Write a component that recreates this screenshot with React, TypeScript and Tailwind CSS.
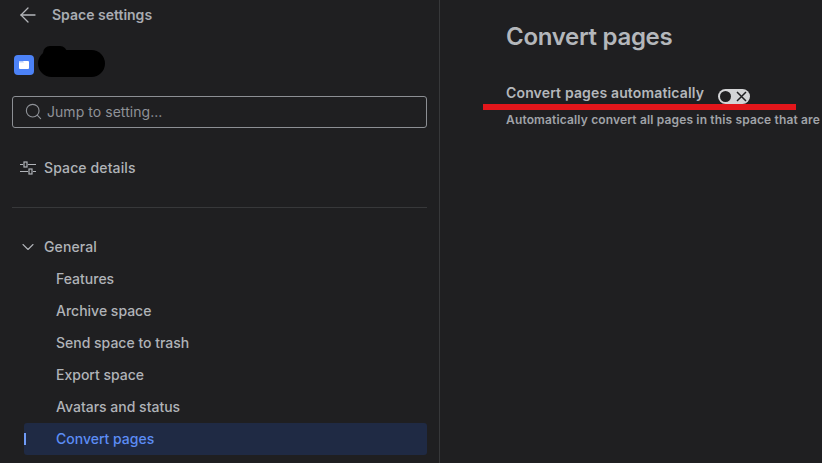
import { ArrowLeft, ChevronDown, Search } from "lucide-react";

const items = ["Features", "Archive space", "Send space to trash", "Export space", "Avatars and status"];

function SlidersIcon() {
  return (
    <svg width="18" height="16" viewBox="0 0 18 16" fill="none" stroke="currentColor" strokeWidth="1.2">
      <path d="M1 4.5h3M9 4.5h8M1 11.5h8M14 11.5h3" />
      <rect x="5" y="2" width="3" height="5" />
      <rect x="10" y="9" width="3" height="5" />
    </svg>
  );
}

function SpaceIcon() {
  return (
    <svg width="20" height="20" viewBox="0 0 20 20">
      <rect width="20" height="20" rx="4" fill="#4c82f7" />
      <path d="M5 7a1 1 0 0 1 1-1h8a1 1 0 0 1 1 1v6a1 1 0 0 1-1 1H6a1 1 0 0 1-1-1z" fill="#fff" />
      <path d="M5 7a1 1 0 0 1 1-1h3l1 1.5H5z" fill="#b9cffb" />
    </svg>
  );
}

export default function App() {
  return (
    <div className="relative flex h-[463px] w-[822px] overflow-hidden bg-[#1f1f21] font-['Inter',sans-serif] text-[#b0b3b8]">
      <aside className="flex w-[440px] shrink-0 flex-col border-r border-[#37383a] pl-3 pr-3">
        <div className="flex h-[30px] items-center">
          <ArrowLeft size={24} strokeWidth={1.3} className="ml-1 text-[#b4b6ba]" />
          <span className="ml-3 text-[14px] leading-5 font-semibold text-[#a9acb2]">Space settings</span>
        </div>
        <div className="mt-5 flex h-[30px] items-center pl-0.5">
          <SpaceIcon />
        </div>
        <div className="mt-[16px] flex h-8 items-center gap-1 rounded-[3px] border border-[#8c8f94] pb-0.5 pl-[11px] text-[14px] tracking-[0.05px] text-[#8f9298]">
          <Search size={19} strokeWidth={1.4} />
          <span>Jump to setting...</span>
        </div>
        <div className="mt-6 flex h-8 items-center gap-[7px] pl-[7px] text-[14px] font-medium tracking-[0.12px]">
          <SlidersIcon />
          <span className="pb-0.5">Space details</span>
        </div>
        <div className="mt-[23px] h-px bg-[#37383a]" />
        <div className="mt-[23px] flex h-8 items-center gap-1.5 pl-1.5 text-[14px] font-medium tracking-[0.12px]">
          <ChevronDown size={20} strokeWidth={1.3} />
          <span className="pb-0.5">General</span>
        </div>
        {items.map((item) => (
          <div key={item} className="flex h-8 items-center pb-0.5 pl-11 text-[14px] font-medium">
            {item}
          </div>
        ))}
        <div className="relative ml-3 flex h-8 items-center rounded-[3px] bg-[#1f2a44] pb-0.5 pl-8 text-[14px] font-medium text-[#5c8df5]">
          <span className="absolute left-0 top-[10px] h-[12px] w-0.5 bg-[#6f9bf7]" />
          Convert pages
        </div>
      </aside>
      <main className="min-w-0 flex-1 pl-[66px] pt-[21px]">
        <h1 className="text-[24px] leading-8 font-semibold tracking-[-0.3px] whitespace-nowrap text-[#b4b7bb]">Convert pages</h1>
        <div className="mt-7 flex items-center">
          <span className="text-[14px] leading-5 font-semibold tracking-[0.15px] whitespace-nowrap text-[#b4b7bb]">Convert pages automatically</span>
          <div className="mt-2 ml-[14px] flex h-[15px] w-8 shrink-0 items-center justify-between rounded-full bg-[#d3d4d6] pl-[2px] pr-[3px]">
            <span className="h-[11px] w-[11px] rounded-full bg-[#1f1f21]" />
            <svg width="11" height="11" viewBox="0 0 11 11" stroke="#1f1f21" strokeWidth="1.5">
              <path d="M1 1l9 9M10 1l-9 9" />
            </svg>
          </div>
        </div>
        <p className="mt-2 text-[12px] leading-4 font-semibold tracking-[0.15px] whitespace-nowrap text-[#a0a3a8]">
          Automatically convert all pages in this space that are
        </p>
      </main>
      {/* hand-drawn marks on top of the screenshot */}
      <div className="absolute left-[38px] top-[50px] h-[27px] w-[67px] rounded-[14px] bg-black" />
      <div className="absolute left-[43px] top-[46px] h-[14px] w-[24px] rounded-full bg-black" />
      <div className="absolute left-[483px] top-[104px] h-[6px] w-[313px] bg-[#e3161b]" />
    </div>
  );
}
